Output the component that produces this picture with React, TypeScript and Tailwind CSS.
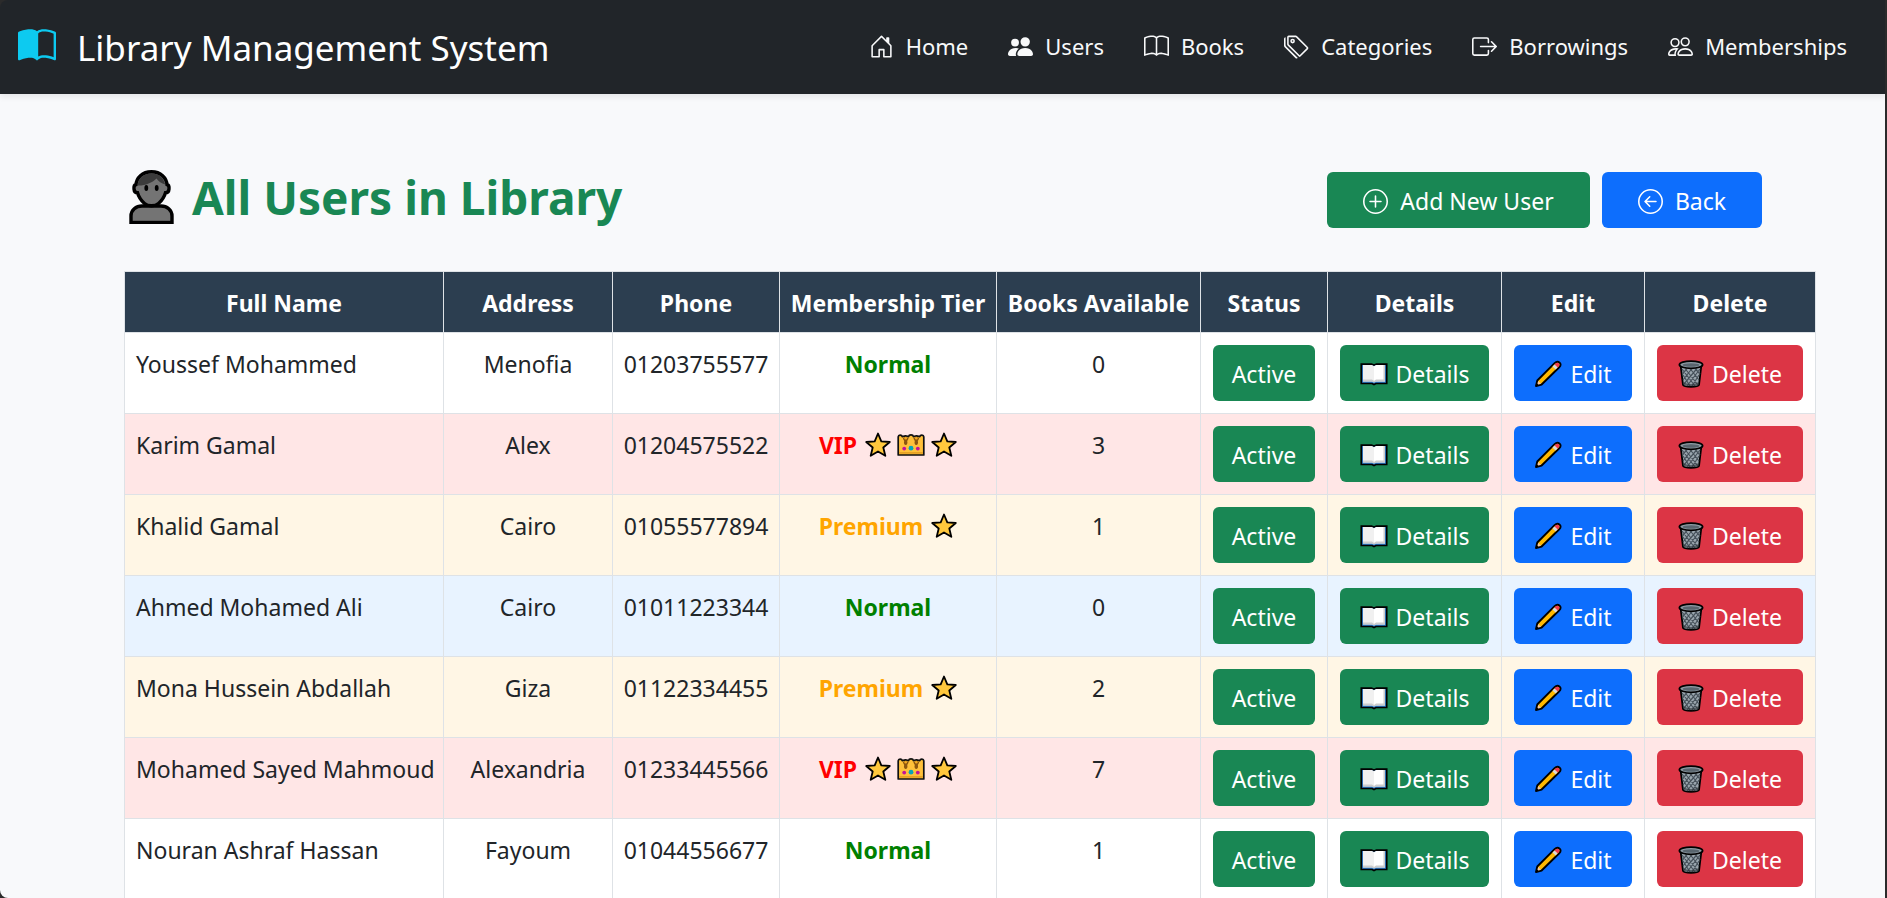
import type { ReactNode } from "react";
import {
  BsArrowLeftCircle,
  BsBook,
  BsBookHalf,
  BsBoxArrowRight,
  BsHouseDoor,
  BsPeople,
  BsPeopleFill,
  BsPlusCircle,
  BsTags,
} from "react-icons/bs";

type Tier = "Normal" | "VIP" | "Premium";

type User = {
  name: string;
  address: string;
  phone: string;
  tier: Tier;
  books: number;
  row: string;
};

const users: User[] = [
  { name: "Youssef Mohammed", address: "Menofia", phone: "01203755577", tier: "Normal", books: 0, row: "bg-white" },
  { name: "Karim Gamal", address: "Alex", phone: "01204575522", tier: "VIP", books: 3, row: "bg-[#ffe6e6]" },
  { name: "Khalid Gamal", address: "Cairo", phone: "01055577894", tier: "Premium", books: 1, row: "bg-[#fff6e5]" },
  { name: "Ahmed Mohamed Ali", address: "Cairo", phone: "01011223344", tier: "Normal", books: 0, row: "bg-[#e8f3ff]" },
  { name: "Mona Hussein Abdallah", address: "Giza", phone: "01122334455", tier: "Premium", books: 2, row: "bg-[#fff6e5]" },
  { name: "Mohamed Sayed Mahmoud", address: "Alexandria", phone: "01233445566", tier: "VIP", books: 7, row: "bg-[#ffe6e6]" },
  { name: "Nouran Ashraf Hassan", address: "Fayoum", phone: "01044556677", tier: "Normal", books: 1, row: "bg-white" },
];

const navItems = [
  { label: "Home", Icon: BsHouseDoor },
  { label: "Users", Icon: BsPeopleFill },
  { label: "Books", Icon: BsBook },
  { label: "Categories", Icon: BsTags },
  { label: "Borrowings", Icon: BsBoxArrowRight },
  { label: "Memberships", Icon: BsPeople },
];

const columns = [
  { label: "Full Name", width: "w-[319px]" },
  { label: "Address", width: "w-[169px]" },
  { label: "Phone", width: "w-[167px]" },
  { label: "Membership Tier", width: "w-[217px]" },
  { label: "Books Available", width: "w-[204px]" },
  { label: "Status", width: "w-[127px]" },
  { label: "Details", width: "w-[174px]" },
  { label: "Edit", width: "w-[143px]" },
  { label: "Delete", width: "w-[171px]" },
];

function PersonIcon() {
  return (
    <svg viewBox="0 0 45 54" className="h-[54px] w-[45px] shrink-0" aria-hidden="true">
      <path d="M2 52.500V46C2 40 7 36 13 36H32C38 36 43 40 43 46V52.500Z" fill="#747474" stroke="#000" strokeWidth="3.400" />
      <path
        d="M22.500 1.700C13 1.700 7.500 8 7 14.500C5 15 4.800 17 5 19C5.200 21.500 6.500 22.800 8.500 22.800C10 28 12 30.500 15.500 33.500C19 36.500 26 36.500 29.500 33.500C33 30.500 35 28 36.500 22.800C38.500 22.800 39.800 21.500 40 19C40.200 17 40 15 38 14.500C37.500 8 32 1.700 22.500 1.700Z"
        fill="#747474"
        stroke="#000"
        strokeWidth="3.400"
      />
      <path d="M8.700 15.500C9 8.500 14 3.400 22.500 3.400C28 3.400 32 5.500 34.300 9.500L36.300 14.500C32.500 13.500 29.500 11.500 27.500 8.500C23 13 16 15.800 8.700 15.500Z" fill="#3b3b3b" />
      <ellipse cx="17.300" cy="18" rx="1.900" ry="3" />
      <ellipse cx="27.700" cy="18" rx="1.900" ry="3" />
      <path d="M4 50.500H41" stroke="#5c5c5c" strokeWidth="1.200" />
    </svg>
  );
}

function StarIcon() {
  return (
    <svg viewBox="0 0 26 26" className="size-[26px]" aria-hidden="true">
      <path
        d="M13 1.500L16.300 9.300L24.800 10L18.300 15.500L20.300 23.800L13 19.400L5.700 23.800L7.700 15.500L1.200 10L9.700 9.300Z"
        fill="#ffc83d"
        stroke="#000"
        strokeWidth="1.800"
        strokeLinejoin="round"
      />
    </svg>
  );
}

function CrownIcon() {
  return (
    <svg viewBox="0 0 28 22" className="h-[22px] w-[28px]" aria-hidden="true">
      <path
        d="M1.200 21V2.800C1.400 .8 4.600 .6 5.200 2.600L8.500 1.800L11.600 2.600C12 .3 16 .3 16.400 2.600L19.500 1.800L22.800 2.600C23.400 .6 26.600 .8 26.800 2.800V21Z"
        fill="#ffc03a"
        stroke="#111"
        strokeWidth="1.700"
        strokeLinejoin="round"
      />
      <path d="M5.800 4.500L7.200 7C6.500 9 7.300 11 8.700 11C10.200 11 10.800 9 10.200 7L11.700 4.500L10 3.200H7Z" fill="#8d560f" />
      <path d="M16.300 4.500L17.800 7C17.100 9 17.800 11 19.300 11C20.700 11 21.500 9 20.800 7L22.200 4.500L21 3.200H18Z" fill="#8d560f" />
      <circle cx="8.700" cy="4.300" r="1.300" fill="#f5a91f" />
      <circle cx="19.300" cy="4.300" r="1.300" fill="#f5a91f" />
      <path d="M2.200 18.900H25.800" stroke="#e09a20" strokeWidth="1.400" />
      <circle cx="7.200" cy="14.600" r="1.900" fill="#c2129b" />
      <circle cx="14" cy="14.200" r="2.400" fill="#09a5b8" />
      <circle cx="20.800" cy="14.600" r="1.900" fill="#c2129b" />
    </svg>
  );
}

function OpenBookIcon() {
  return (
    <svg viewBox="0 0 28 24" className="h-[24px] w-[28px] shrink-0" aria-hidden="true">
      <path d="M1.300 2.200H11.500L14 3L16.500 2.200H26.700V21.500H16L14 22.500L12 21.500H1.300Z" fill="#2f7fd3" stroke="#000" strokeWidth="1.700" />
      <path d="M3 3H12L14 4.200V20L12.500 19.500H3Z" fill="#f0f0f0" />
      <path d="M25 3H16L14 4.200V20L15.500 19.500H25Z" fill="#fff" />
      <path d="M3 17.500H12L14 19L16 17.500H23.500V3H25V19.600H16L14 20.800L12 19.600H3Z" fill="#ccc" />
    </svg>
  );
}

function PencilIcon() {
  return (
    <svg viewBox="0 0 28 28" className="size-[28px] shrink-0" aria-hidden="true">
      <path
        d="M2 26L3.300 20.500L20.600 3.100C22.200 1.500 24.200 1.300 25.600 2.600C26.900 4 26.600 6 25 7.500L7.600 24.500Z"
        fill="#ffb900"
        stroke="#000"
        strokeWidth="1.900"
        strokeLinejoin="round"
      />
      <path d="M21.200 3.800C22.500 2.500 24 2.300 24.900 3.300C25.800 4.200 25.600 5.600 24.300 6.900L23.600 7.600L20.500 4.500Z" fill="#f03a50" />
      <path d="M20.500 4.500L23.600 7.600L21.600 9.600L18.500 6.500Z" fill="#d9d9d9" />
      <path d="M4.200 21L7 23.800L3.200 25Z" fill="#f3c8ab" />
      <path d="M2 26L2.800 23L5 25.200Z" fill="#000" />
    </svg>
  );
}

function TrashIcon() {
  return (
    <svg viewBox="0 0 26 28" className="h-[28px] w-[26px] shrink-0" aria-hidden="true">
      <path d="M2.700 6L5 25C6 27.500 20 27.500 21 25L23.300 6Z" fill="#9aa6ae" stroke="#000" strokeWidth="1.800" />
      <path
        d="M4 9L17 26M7 8.500L20 25M12 8.500L21 20M17 8.500L22 14M5 15L12 26M22 9L9 26M19 8.500L6 24M14 8.500L5 20M9 8.500L4.500 14M21 15L14 26"
        stroke="#47525b"
        strokeWidth="1.200"
      />
      <path d="M5.500 22C9 24.500 17 24.500 20.500 22L20 25C17 26.600 9 26.600 6 25Z" fill="#2c3237" opacity=".6" />
      <ellipse cx="13" cy="4.700" rx="11.600" ry="3.600" fill="#8f9ca5" stroke="#000" strokeWidth="1.800" />
      <ellipse cx="13" cy="5" rx="8.500" ry="1.700" fill="#59656e" />
    </svg>
  );
}

function TierLabel({ tier }: { tier: Tier }) {
  if (tier === "VIP") {
    return (
      <span className="flex items-center justify-center gap-[6px] font-bold text-[#ff0000]">
        <span className="mr-0.5">VIP</span>
        <StarIcon />
        <CrownIcon />
        <StarIcon />
      </span>
    );
  }
  if (tier === "Premium") {
    return (
      <span className="flex items-center justify-center gap-2 font-bold text-[#ffa500]">
        Premium
        <StarIcon />
      </span>
    );
  }
  return <span className="font-bold text-[#008000]">Normal</span>;
}

function RowButton({ color, children }: { color: string; children: ReactNode }) {
  return (
    <button type="button" className={`flex h-[56px] w-full items-center justify-center gap-2 rounded-md pt-[2px] text-white ${color}`}>
      {children}
    </button>
  );
}

export default function App() {
  const textCell = "border border-[#dee2e6] pt-[13px] pb-[11px] align-top";
  const buttonCell = "border border-[#dee2e6] p-3 align-top";

  return (
    <div className="h-screen bg-[#2b2b2b] pr-[2px] font-['Noto_Sans',sans-serif] text-[23px] leading-[36px] text-[#212529]">
      <div className="h-full overflow-x-hidden overflow-y-auto rounded-l-lg bg-[#f8f9fb] [scrollbar-width:none]">
        <header className="flex h-[94px] items-center justify-between bg-[#212529] pr-[38px] pb-[2px] pl-[18px] shadow-[0_3px_6px_rgba(0,0,0,0.08)]">
          <a href="#" className="flex items-center gap-[21px] text-[35px] text-white">
            <BsBookHalf className="size-[38px] text-[#0dcaf0]" />
            <span className="pt-1">Library Management System</span>
          </a>
          <nav className="flex items-center gap-10 text-[22px] text-[#f8f9fa]">
            {navItems.map(({ label, Icon }) => (
              <a key={label} href="#" className="flex items-center gap-[12px]">
                <Icon className="size-[25px]" />
                {label}
              </a>
            ))}
          </nav>
        </header>

        <main className="px-[123px] pt-[78px]">
          <div className="mb-[43px] flex h-[56px] items-center justify-between">
            <h1 className="flex items-center gap-[18px] pb-[7px] pl-[6px] text-[46px] leading-[54px] font-bold text-[#198754]">
              <PersonIcon />
              All Users in Library
            </h1>
            <div className="flex gap-3 text-white">
              <a href="#" className="flex h-[56px] w-[263px] items-center justify-center gap-3 rounded-md bg-[#198754] pt-[2px]">
                <BsPlusCircle className="size-[25px]" />
                Add New User
              </a>
              <a href="#" className="flex h-[56px] w-[160px] items-center justify-center gap-3 rounded-md bg-[#0d6efd] pt-[2px]">
                <BsArrowLeftCircle className="size-[25px]" />
                Back
              </a>
            </div>
          </div>

          <table className="ml-px w-[1692px] table-fixed border-collapse text-center whitespace-nowrap">
            <colgroup>
              {columns.map((column) => (
                <col key={column.label} className={column.width} />
              ))}
            </colgroup>
            <thead>
              <tr className="bg-[#2c3e50] text-white">
                {columns.map((column) => (
                  <th key={column.label} scope="col" className="border border-[#dee2e6] pt-[13px] pb-[11px] font-bold">
                    {column.label}
                  </th>
                ))}
              </tr>
            </thead>
            <tbody>
              {users.map((user) => (
                <tr key={user.phone} className={user.row}>
                  <td className={`${textCell} pl-[11px] text-left`}>{user.name}</td>
                  <td className={textCell}>{user.address}</td>
                  <td className={textCell}>{user.phone}</td>
                  <td className={textCell}>
                    <TierLabel tier={user.tier} />
                  </td>
                  <td className={textCell}>{user.books}</td>
                  <td className={buttonCell}>
                    <RowButton color="bg-[#198754]">Active</RowButton>
                  </td>
                  <td className={buttonCell}>
                    <RowButton color="bg-[#198754]">
                      <OpenBookIcon />
                      Details
                    </RowButton>
                  </td>
                  <td className={buttonCell}>
                    <RowButton color="bg-[#0d6efd]">
                      <PencilIcon />
                      Edit
                    </RowButton>
                  </td>
                  <td className={buttonCell}>
                    <RowButton color="bg-[#dc3545]">
                      <TrashIcon />
                      Delete
                    </RowButton>
                  </td>
                </tr>
              ))}
            </tbody>
          </table>
        </main>
      </div>
    </div>
  );
}
